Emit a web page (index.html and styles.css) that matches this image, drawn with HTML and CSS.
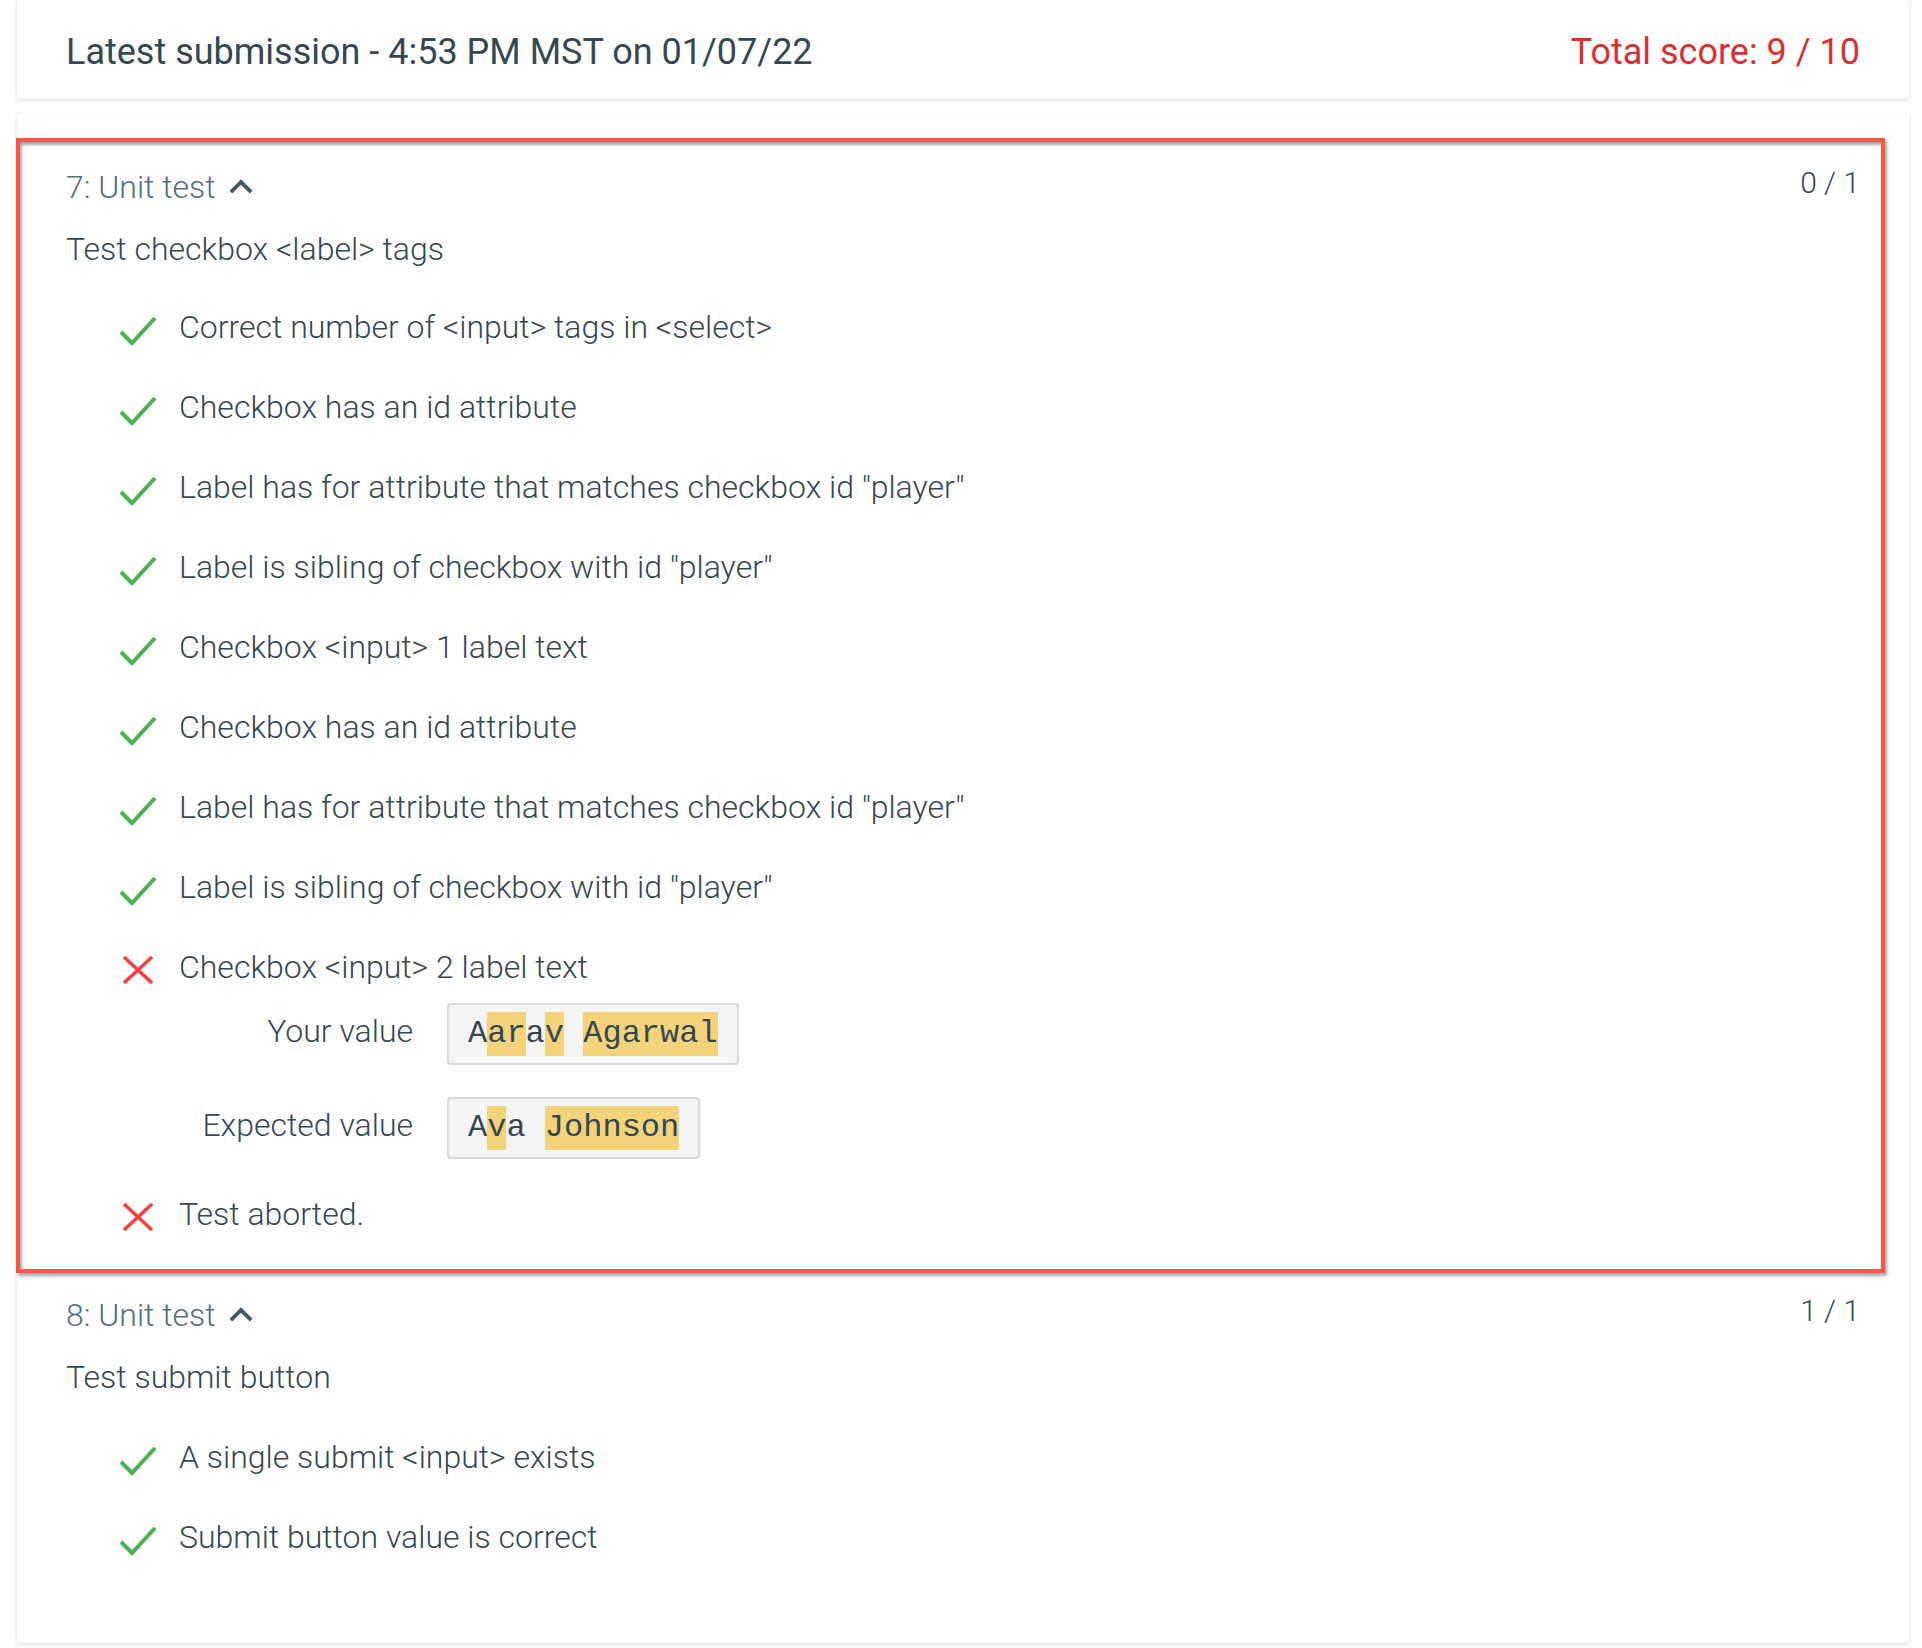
FILE: index.html
```html
<!DOCTYPE html>
<html lang="en">
<head>
<meta charset="utf-8">
<title>Submission results</title>
<link rel="stylesheet" href="styles.css">
</head>
<body>
<div class="page">
  <div class="card summary">
    <div class="summary-title">Latest submission - 4:53 PM MST on 01/07/22</div>
    <div class="total">Total score: 9 / 10</div>
  </div>

  <div class="card results">
    <section class="test flagged">
      <div class="test-head">
        <div class="test-title">7: Unit test
          <svg class="chev" viewBox="0 0 24 24"><path d="M12 8l-6 6 1.41 1.41L12 10.83l4.59 4.58L18 14z"/></svg>
        </div>
        <div class="test-score">0 / 1</div>
      </div>
      <div class="desc">Test checkbox &lt;label&gt; tags</div>
      <ul class="checks">
        <li><div class="row"><svg class="ok" viewBox="0 0 42 42"><polyline points="5,26 16,37 39,12"/></svg><span>Correct number of &lt;input&gt; tags in &lt;select&gt;</span></div></li>
        <li><div class="row"><svg class="ok" viewBox="0 0 42 42"><polyline points="5,26 16,37 39,12"/></svg><span>Checkbox has an id attribute</span></div></li>
        <li><div class="row"><svg class="ok" viewBox="0 0 42 42"><polyline points="5,26 16,37 39,12"/></svg><span>Label has for attribute that matches checkbox id "player"</span></div></li>
        <li><div class="row"><svg class="ok" viewBox="0 0 42 42"><polyline points="5,26 16,37 39,12"/></svg><span>Label is sibling of checkbox with id "player"</span></div></li>
        <li><div class="row"><svg class="ok" viewBox="0 0 42 42"><polyline points="5,26 16,37 39,12"/></svg><span>Checkbox &lt;input&gt; 1 label text</span></div></li>
        <li><div class="row"><svg class="ok" viewBox="0 0 42 42"><polyline points="5,26 16,37 39,12"/></svg><span>Checkbox has an id attribute</span></div></li>
        <li><div class="row"><svg class="ok" viewBox="0 0 42 42"><polyline points="5,26 16,37 39,12"/></svg><span>Label has for attribute that matches checkbox id "player"</span></div></li>
        <li><div class="row"><svg class="ok" viewBox="0 0 42 42"><polyline points="5,26 16,37 39,12"/></svg><span>Label is sibling of checkbox with id "player"</span></div></li>
        <li class="failed">
          <div class="row"><svg class="bad" viewBox="0 0 42 42"><line x1="8" y1="11" x2="36" y2="37"/><line x1="36" y1="11" x2="8" y2="37"/></svg><span>Checkbox &lt;input&gt; 2 label text</span></div>
          <div class="values">
            <div class="value-label">Your value</div>
            <div class="value">A<mark>ar</mark>a<mark>v</mark> <mark>Agarwal</mark></div>
            <div class="value-label">Expected value</div>
            <div class="value">A<mark>v</mark>a <mark>Johnson</mark></div>
          </div>
        </li>
        <li><div class="row"><svg class="bad" viewBox="0 0 42 42"><line x1="8" y1="11" x2="36" y2="37"/><line x1="36" y1="11" x2="8" y2="37"/></svg><span>Test aborted.</span></div></li>
      </ul>
    </section>

    <section class="test">
      <div class="test-head">
        <div class="test-title">8: Unit test
          <svg class="chev" viewBox="0 0 24 24"><path d="M12 8l-6 6 1.41 1.41L12 10.83l4.59 4.58L18 14z"/></svg>
        </div>
        <div class="test-score">1 / 1</div>
      </div>
      <div class="desc">Test submit button</div>
      <ul class="checks">
        <li><div class="row"><svg class="ok" viewBox="0 0 42 42"><polyline points="5,26 16,37 39,12"/></svg><span>A single submit &lt;input&gt; exists</span></div></li>
        <li><div class="row"><svg class="ok" viewBox="0 0 42 42"><polyline points="5,26 16,37 39,12"/></svg><span>Submit button value is correct</span></div></li>
      </ul>
    </section>
  </div>
</div>
</body>
</html>
```

FILE: styles.css
```css
html, body {
  margin: 0;
  padding: 0;
  background: #ffffff;
}

body {
  font-family: Roboto, "Liberation Sans", Arial, sans-serif;
  color: #37474f;
}

.page {
  padding: 0 13px 4px 17px;
}

.card {
  background: #ffffff;
  box-shadow: 0 1px 4px rgba(0, 0, 0, 0.14);
  border-radius: 0 0 4px 4px;
}

.summary {
  display: flex;
  justify-content: space-between;
  align-items: flex-start;
  padding: 31px 49px 26px;
  font-size: 36px;
  line-height: 42px;
}

.total {
  color: #d7302f;
}

.results {
  margin-top: 15px;
  padding: 54px 49px 66px;
  font-weight: 300;
}

.test {
  position: relative;
}

.test + .test {
  margin-top: 42px;
}

.test.flagged::after {
  content: "";
  position: absolute;
  top: -30px;
  bottom: -19px;
  left: -50px;
  right: -25px;
  border: 4px solid #f65647;
  box-shadow: 2px 3px 3px rgba(0, 0, 0, 0.35), inset 2px 3px 3px rgba(0, 0, 0, 0.35);
  pointer-events: none;
}

.test-head {
  display: flex;
  justify-content: space-between;
  align-items: flex-start;
}

.test-title {
  display: flex;
  align-items: center;
  font-size: 32px;
  line-height: 38px;
  color: #546e7a;
}

.chev {
  width: 46px;
  height: 46px;
  margin: -4px 0 -4px 2px;
  fill: #455a64;
}

.test-score {
  font-size: 30px;
  line-height: 38px;
  margin-top: -4px;
  color: #37474f;
}

.desc {
  margin-top: 24px;
  font-size: 32px;
  line-height: 38px;
}

.checks {
  list-style: none;
  margin: 19px 0 0 50px;
  padding: 0;
  font-size: 32px;
  line-height: 38px;
}

.test + .test .checks {
  margin-top: 21px;
}

.checks li {
  padding: 21px 0;
}

.checks li.failed {
  padding-bottom: 15px;
}

.row {
  display: flex;
  align-items: center;
  gap: 21px;
}

.row svg {
  width: 42px;
  height: 42px;
  margin: -2px 0;
  flex: none;
  fill: none;
}

.ok polyline {
  stroke: #4caf50;
  stroke-width: 4;
  stroke-linejoin: miter;
}

.bad line {
  stroke: #f44040;
  stroke-width: 3.6;
}

.values {
  display: grid;
  grid-template-columns: 234px auto;
  column-gap: 34px;
  row-gap: 32px;
  align-items: baseline;
  justify-items: start;
  margin: 17px 0 0 63px;
}

.value-label {
  justify-self: end;
}

.value {
  font-family: "Liberation Mono", "Courier New", monospace;
  font-size: 32px;
  font-weight: 400;
  line-height: 44px;
  white-space: pre;
  color: #37474f;
  background: #f4f4f4;
  border: 2px solid #dadada;
  border-radius: 4px;
  padding: 7px 19px;
}

.value mark {
  display: inline-block;
  background: #f2d37c;
  color: inherit;
}
```
